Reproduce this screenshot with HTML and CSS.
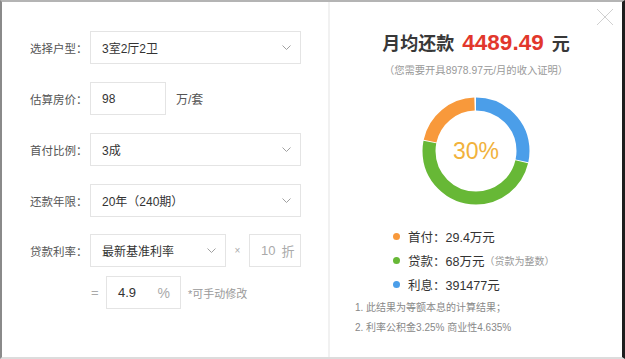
FILE: index.html
```html
<!DOCTYPE html>
<html lang="zh-CN">
<head>
<meta charset="UTF-8">
<meta name="viewport" content="width=device-width,initial-scale=1.0">
<title>房贷计算器</title>
<link rel="stylesheet" href="styles.css">
</head>
<body>

<div class="dialog">
  <!-- left: inputs -->
  <div class="form">
    <div class="row">
      <span class="label">选择户型：</span>
      <div class="select wide"><span>3室2厅2卫</span><svg class="chev" width="9" height="6" viewBox="0 0 9 6"><polyline points="0.5,0.5 4.5,4.5 8.5,0.5"/></svg></div>
    </div>
    <div class="row">
      <span class="label">估算房价：</span>
      <div class="input price"><span>98</span></div>
      <span class="unit">万/套</span>
    </div>
    <div class="row">
      <span class="label">首付比例：</span>
      <div class="select wide"><span>3成</span><svg class="chev" width="9" height="6" viewBox="0 0 9 6"><polyline points="0.5,0.5 4.5,4.5 8.5,0.5"/></svg></div>
    </div>
    <div class="row">
      <span class="label">还款年限：</span>
      <div class="select wide"><span>20年（240期）</span><svg class="chev" width="9" height="6" viewBox="0 0 9 6"><polyline points="0.5,0.5 4.5,4.5 8.5,0.5"/></svg></div>
    </div>
    <div class="row">
      <span class="label">贷款利率：</span>
      <div class="select rate"><span>最新基准利率</span><svg class="chev" width="9" height="6" viewBox="0 0 9 6"><polyline points="0.5,0.5 4.5,4.5 8.5,0.5"/></svg></div>
      <span class="times">×</span>
      <div class="input discount"><span>10</span><span>折</span></div>
    </div>
    <div class="row eq">
      <span class="equal">=</span>
      <div class="input pct"><span class="num">4.9</span><span class="sign">%</span></div>
      <span class="hint">*可手动修改</span>
    </div>
  </div>

  <!-- right: result -->
  <div class="result">
    <div class="title">月均还款 <b>4489.49</b> 元</div>
    <div class="sub">（您需要开具8978.97元/月的收入证明）</div>
    <div class="donut">
      <svg width="108" height="108" viewBox="0 0 108 108">
        <g transform="rotate(-90 54 54)" fill="none" stroke-width="13">
          <!-- circumference 2*pi*47 = 295.3 -->
          <circle cx="54" cy="54" r="47" stroke="#4b9ee9" stroke-dasharray="83.7 211.6" stroke-dashoffset="0"/>
          <circle cx="54" cy="54" r="47" stroke="#67b836" stroke-dasharray="145.5 149.8" stroke-dashoffset="-84.7"/>
          <circle cx="54" cy="54" r="47" stroke="#f8993b" stroke-dasharray="62.1 233.2" stroke-dashoffset="-231.2"/>
        </g>
      </svg>
      <span class="pct-text">30%</span>
    </div>
    <ul class="legend">
      <li><i class="dot orange"></i>首付：29.4万元</li>
      <li><i class="dot green"></i>贷款：68万元<small>（贷款为整数）</small></li>
      <li><i class="dot blue"></i>利息：391477元</li>
    </ul>
    <div class="notes">
      <p>1. 此结果为等额本息的计算结果；</p>
      <p>2. 利率公积金3.25% 商业性4.635%</p>
    </div>
  </div>

  <svg class="close" width="18" height="18" viewBox="0 0 18 18"><path d="M1 1L17 17M17 1L1 17"/></svg>
</div>

</body>
</html>
```

FILE: styles.css
```css
*,*::before,*::after{box-sizing:border-box;margin:0;padding:0}
body{
  font-family:"Liberation Sans","Noto Sans CJK SC",sans-serif;
  background:#fff;
  color:#333;
}

/* === FRAME === */
.dialog{
  position:relative;
  width:625px;
  height:359px;
  display:flex;
  background:#fff;
  border-top:2px solid #b4b4b4;
  border-left:2px solid #8a8a8a;
  border-bottom:2px solid #dcdcdc;
  border-right:3px solid #1e1e1e;
}

/* === LEFT FORM === */
.form{
  width:328px;
  padding:29px 0 0 28px;
  border-right:2px solid #f1f1f1;
}
.row{
  display:flex;
  align-items:center;
  height:33px;
  margin-bottom:18px;
}
.row:nth-child(4){margin-bottom:17px}
.row:nth-child(5){margin-bottom:9px}
.label{
  width:60px;
  font-size:11.5px;
  color:#555;
  white-space:nowrap;
}
.select,.input{
  height:33px;
  border:1px solid #e4e4e4;
  display:flex;
  align-items:center;
  font-size:12px;
  color:#333;
  padding-left:11px;
}
.select{justify-content:space-between;padding-right:9px}
.select.wide{width:211px}
.select.rate{width:136px}
.chev{fill:none;stroke:#a0a0a0;stroke-width:1}
.input.price{width:76px}
.unit{margin-left:10px;font-size:12px;color:#555}
.times{width:23px;text-align:center;font-size:10px;color:#aaa}
.input.discount{
  width:52px;
  padding-left:11px;
  gap:6px;
  font-size:13px;
  color:#aaa;
}
.row.eq{padding-left:60px}
.equal{width:16px;font-size:13px;color:#aaa;padding-left:1px}
.input.pct{width:75px;padding-left:11px;justify-content:space-between;padding-right:10px}
.input.pct .num{font-size:13px;color:#333}
.input.pct .sign{font-size:14px;color:#aaa}
.hint{margin-left:7px;font-size:11px;color:#999}

/* === RIGHT RESULT === */
.result{
  flex:1;
  display:flex;
  flex-direction:column;
  align-items:center;
  padding-top:28px;
}
.title{
  font-size:18px;
  font-weight:bold;
  line-height:26px;
  color:#383838;
  white-space:nowrap;
}
.title b{font-size:22.5px;color:#e2372c;margin:0 3px}
.sub{
  margin-top:7px;
  font-size:10.3px;
  line-height:14px;
  color:#999;
  white-space:nowrap;
}
.donut{
  position:relative;
  margin-top:19px;
  width:108px;
  height:108px;
}
.donut svg{display:block}
.pct-text{
  position:absolute;
  top:0;left:0;right:0;bottom:0;
  display:flex;
  align-items:center;
  justify-content:center;
  font-size:23px;
  color:#f1b23c;
}
.legend{
  list-style:none;
  align-self:flex-start;
  margin:19px 0 0 63px;
}
.legend li{
  display:flex;
  align-items:center;
  height:24px;
  font-size:12.5px;
  color:#333;
  white-space:nowrap;
}
.legend small{font-size:10px;color:#999}
.dot{width:7px;height:7px;border-radius:50%;margin-right:8px}
.dot.orange{background:#f8993b}
.dot.green{background:#67b836}
.dot.blue{background:#4b9ee9}
.notes{
  align-self:flex-start;
  margin:2px 0 0 25px;
}
.notes p{font-size:10px;line-height:20px;color:#888;white-space:nowrap}

/* === CLOSE === */
.close{
  position:absolute;
  top:6px;
  right:8px;
  fill:none;
  stroke:#d0d0d0;
  stroke-width:1;
}
```
